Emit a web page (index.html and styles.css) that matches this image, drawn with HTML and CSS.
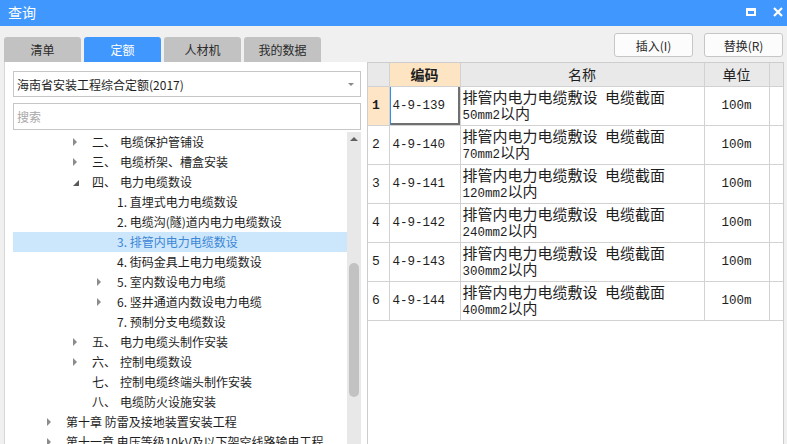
FILE: index.html
```html
<!DOCTYPE html>
<html lang="zh-CN">
<head>
<meta charset="utf-8">
<title>查询</title>
<link rel="stylesheet" href="styles.css">
</head>
<body>
<div class="window">
  <div class="titlebar">
    <span class="title">查询</span>
    <div class="win-ctrls">
      <span class="ico-max"></span>
      <svg class="ico-close" width="10" height="10" viewBox="0 0 10 10"><path d="M1 1 L9 9 M9 1 L1 9" stroke="#fff" stroke-width="2.2" fill="none"/></svg>
    </div>
  </div>

  <div class="toolbar">
    <div class="tabs">
      <div class="tab">清单</div>
      <div class="tab active">定额</div>
      <div class="tab">人材机</div>
      <div class="tab">我的数据</div>
    </div>
    <div class="actions">
      <button class="btn">插入(I)</button>
      <button class="btn">替换(R)</button>
    </div>
  </div>

  <div class="workspace">
    <div class="left-panel">
      <div class="select">
        <span>海南省安装工程综合定额(2017)</span>
        <span class="caret"></span>
      </div>
      <input class="search" type="text" placeholder="搜索">
      <div class="tree">
        <div class="tree-list">
          <div class="node l2"><span class="tw"><i class="arr"></i></span><span class="ord">二、</span>电缆保护管铺设</div>
          <div class="node l2"><span class="tw"><i class="arr"></i></span><span class="ord">三、</span>电缆桥架、槽盒安装</div>
          <div class="node l2"><span class="tw"><i class="arr open"></i></span><span class="ord">四、</span>电力电缆数设</div>
          <div class="node l3"><span class="tw"></span>1. 直埋式电力电缆数设</div>
          <div class="node l3"><span class="tw"></span>2. 电缆沟(隧)道内电力电缆数设</div>
          <div class="node l3 selected"><span class="tw"></span>3. 排管内电力电缆数设</div>
          <div class="node l3"><span class="tw"></span>4. 街码金具上电力电缆数设</div>
          <div class="node l3"><span class="tw"><i class="arr"></i></span>5. 室内数设电力电缆</div>
          <div class="node l3"><span class="tw"><i class="arr"></i></span>6. 竖井通道内数设电力电缆</div>
          <div class="node l3"><span class="tw"></span>7. 预制分支电缆数设</div>
          <div class="node l2"><span class="tw"><i class="arr"></i></span><span class="ord">五、</span>电力电缆头制作安装</div>
          <div class="node l2"><span class="tw"><i class="arr"></i></span><span class="ord">六、</span>控制电缆数设</div>
          <div class="node l2"><span class="tw"></span><span class="ord">七、</span>控制电缆终端头制作安装</div>
          <div class="node l2"><span class="tw"></span><span class="ord">八、</span>电缆防火设施安装</div>
          <div class="node l1"><span class="tw"><i class="arr"></i></span>第十章 防雷及接地装置安装工程</div>
          <div class="node l1"><span class="tw"><i class="arr"></i></span>第十一章 电压等级10kV及以下架空线路输电工程</div>
        </div>
        <div class="vscroll">
          <span class="up"></span>
          <span class="thumb"></span>
        </div>
      </div>
    </div>

    <div class="right-panel">
      <table class="grid">
        <colgroup>
          <col class="c-no"><col class="c-code"><col class="c-name"><col class="c-unit"><col class="c-end">
        </colgroup>
        <thead>
          <tr>
            <th></th>
            <th class="hl">编码</th>
            <th class="reg">名称</th>
            <th class="reg">单位</th>
            <th></th>
          </tr>
        </thead>
        <tbody>
          <tr>
            <td class="no cur">1</td>
            <td class="code focus">4-9-139</td>
            <td class="name"><div class="ln">排管内电力电缆敷设<span class="lat">&nbsp;</span>电缆截面</div><div class="ln"><span class="lat">50mm2</span>以内</div></td>
            <td class="unit">100m</td>
            <td></td>
          </tr>
          <tr>
            <td class="no">2</td>
            <td class="code">4-9-140</td>
            <td class="name"><div class="ln">排管内电力电缆敷设<span class="lat">&nbsp;</span>电缆截面</div><div class="ln"><span class="lat">70mm2</span>以内</div></td>
            <td class="unit">100m</td>
            <td></td>
          </tr>
          <tr>
            <td class="no">3</td>
            <td class="code">4-9-141</td>
            <td class="name"><div class="ln">排管内电力电缆敷设<span class="lat">&nbsp;</span>电缆截面</div><div class="ln"><span class="lat">120mm2</span>以内</div></td>
            <td class="unit">100m</td>
            <td></td>
          </tr>
          <tr>
            <td class="no">4</td>
            <td class="code">4-9-142</td>
            <td class="name"><div class="ln">排管内电力电缆敷设<span class="lat">&nbsp;</span>电缆截面</div><div class="ln"><span class="lat">240mm2</span>以内</div></td>
            <td class="unit">100m</td>
            <td></td>
          </tr>
          <tr>
            <td class="no">5</td>
            <td class="code">4-9-143</td>
            <td class="name"><div class="ln">排管内电力电缆敷设<span class="lat">&nbsp;</span>电缆截面</div><div class="ln"><span class="lat">300mm2</span>以内</div></td>
            <td class="unit">100m</td>
            <td></td>
          </tr>
          <tr>
            <td class="no">6</td>
            <td class="code">4-9-144</td>
            <td class="name"><div class="ln">排管内电力电缆敷设<span class="lat">&nbsp;</span>电缆截面</div><div class="ln"><span class="lat">400mm2</span>以内</div></td>
            <td class="unit">100m</td>
            <td></td>
          </tr>
        </tbody>
      </table>
    </div>
  </div>
</div>
</body>
</html>
```

FILE: styles.css
```css
* { box-sizing: border-box; }

html, body {
  margin: 0;
  padding: 0;
}

body {
  width: 787px;
  height: 444px;
  overflow: hidden;
  background: #f0f0f0;
  font-family: "Noto Sans CJK SC", "Noto Sans", sans-serif;
  font-size: 12px;
  color: #1e1e1e;
}

.window {
  display: flex;
  flex-direction: column;
  height: 444px;
}

/* title bar */
.titlebar {
  height: 26px;
  background: #4097fe;
  display: flex;
  align-items: center;
  padding: 0 4px 0 8px;
  color: #fff;
  flex: none;
}

.title {
  font-size: 14px;
  line-height: 20px;
  margin-top: -2px;
}

.win-ctrls {
  margin-left: auto;
  display: flex;
  align-items: center;
  gap: 17px;
  margin-top: -3px;
}

.ico-max {
  display: block;
  width: 10px;
  height: 8px;
  border: 2px solid #fff;
  border-top-width: 3px;
}

.ico-close {
  display: block;
}

/* toolbar with tabs and buttons */
.toolbar {
  height: 36px;
  display: flex;
  padding: 0 4px 0 4px;
  flex: none;
}

.tabs {
  display: flex;
  gap: 3px;
  align-self: flex-end;
}

.tab {
  width: 77px;
  height: 25px;
  background: #c2c2c2;
  border-radius: 3px 3px 0 0;
  display: flex;
  align-items: center;
  justify-content: center;
  font-size: 12px;
  color: #2a2a2a;
}

.tab.active {
  background: #4097fe;
  color: #fff;
}

.actions {
  margin-left: auto;
  margin-top: 7px;
  display: flex;
  gap: 11px;
  align-self: flex-start;
}

.btn {
  width: 79px;
  height: 24px;
  background: #fcfcfc;
  border: 1px solid #c6c6c6;
  border-radius: 3px;
  font-family: "Noto Sans CJK SC", "Noto Sans", sans-serif;
  font-size: 12px;
  color: #2a2a2a;
  padding: 0;
}

/* workspace */
.workspace {
  flex: 1;
  display: flex;
  padding: 0 3px 0 4px;
  min-height: 0;
}

.left-panel {
  width: 363px;
  flex: none;
  background: #fff;
  border-left: 1px solid #d6d6d6;
  padding: 9px 6px 0 8px;
  display: flex;
  flex-direction: column;
  min-height: 0;
}

.select {
  height: 26px;
  border: 1px solid #c6c6c6;
  display: flex;
  align-items: center;
  padding: 0 5px 0 3px;
  font-size: 12px;
  color: #1e1e1e;
  flex: none;
}

.caret {
  margin-left: auto;
  width: 0;
  height: 0;
  border-left: 3px solid transparent;
  border-right: 3px solid transparent;
  border-top: 3px solid #8a8a8a;
  margin-right: 1px;
}

.search {
  margin-top: 6px;
  height: 27px;
  width: 100%;
  border: 1px solid #c6c6c6;
  padding: 0 3px;
  font-family: "Noto Sans CJK SC", "Noto Sans", sans-serif;
  font-size: 12px;
  outline: none;
  flex: none;
  background: #fff;
}

.search::placeholder {
  color: #a8a8a8;
}

.tree {
  margin-top: 2px;
  flex: 1;
  display: flex;
  min-height: 0;
  overflow: hidden;
}

.tree-list {
  width: 334px;
  flex: none;
  overflow: hidden;
}

.node {
  height: 20px;
  line-height: 20px;
  white-space: nowrap;
  display: flex;
  align-items: center;
  font-size: 12px;
  color: #1e1e1e;
}

.node.l1 { padding-left: 34px; }
.node.l2 { padding-left: 60px; }
.node.l3 { padding-left: 84px; }

.tw {
  width: 19px;
  flex: none;
  height: 20px;
  display: flex;
  align-items: center;
}

.node.l3 .tw { width: 20px; }

.arr {
  display: block;
  width: 0;
  height: 0;
  border-top: 4px solid transparent;
  border-bottom: 4px solid transparent;
  border-left: 4px solid #8c8c8c;
}

.arr.open {
  border-top: 0;
  border-left: 6px solid transparent;
  border-bottom: 6px solid #5a5a5a;
  margin-top: 2px;
}

.ord {
  margin-right: 4px;
}

.node.selected {
  background: #cce6fb;
  color: #3b86d6;
}

.vscroll {
  width: 14px;
  flex: none;
  background: #e8e8e8;
  display: flex;
  flex-direction: column;
  align-items: center;
}

.vscroll .up {
  margin-top: 5px;
  width: 0;
  height: 0;
  border-left: 4px solid transparent;
  border-right: 4px solid transparent;
  border-bottom: 4px solid #606060;
}

.vscroll .thumb {
  margin-top: 122px;
  width: 10px;
  height: 134px;
  border-radius: 5px;
  background: #c2c2c2;
}

/* right grid */
.right-panel {
  flex: 1;
  background: #fff;
  border: 1px solid #cdcdcd;
  border-bottom: 0;
  min-width: 0;
}

.grid {
  width: 415px;
  border-collapse: collapse;
  table-layout: fixed;
  font-size: 14px;
}

.c-no { width: 21px; }
.c-code { width: 71px; }
.c-name { width: 244px; }
.c-unit { width: 65px; }
.c-end { width: 14px; }

.grid th {
  height: 23px;
  background: #e9e9e9;
  border: 1px solid #d2d2d2;
  border-top: 0;
  font-weight: 700;
  font-size: 14px;
  color: #1e1e1e;
  padding: 0;
  line-height: 20px;
}

.grid th.reg { font-weight: 400; }
.grid th.hl { background: #fde4c3; }

.grid th:first-child,
.grid td:first-child { border-left: 0; }

.grid th:last-child,
.grid td:last-child { border-right: 0; }

.grid td {
  height: 39px;
  border: 1px solid #d2d2d2;
  padding: 0;
  vertical-align: middle;
  color: #1e1e1e;
}

.grid td.no {
  font-family: "Liberation Mono", monospace;
  font-size: 13px;
  padding-left: 4px;
}

.grid td.no.cur {
  background: #fde5c6;
  font-weight: 700;
}

.grid td.code {
  font-family: "Liberation Mono", monospace;
  font-size: 12.5px;
  padding-left: 3px;
}

.grid td.focus {
  box-shadow: inset 1px 0 0 #2f8cf0, inset -2px -2px 0 #707070;
}

.grid td.name {
  vertical-align: top;
  padding: 2px 0 0 2px;
  font-size: 15px;
  white-space: nowrap;
  overflow: hidden;
}

.ln {
  height: 16px;
  line-height: 16px;
}

.lat {
  font-family: "Liberation Mono", monospace;
  font-size: 12.5px;
}

.grid td.unit {
  text-align: center;
  font-family: "Liberation Mono", monospace;
  font-size: 12.5px;
}
```
